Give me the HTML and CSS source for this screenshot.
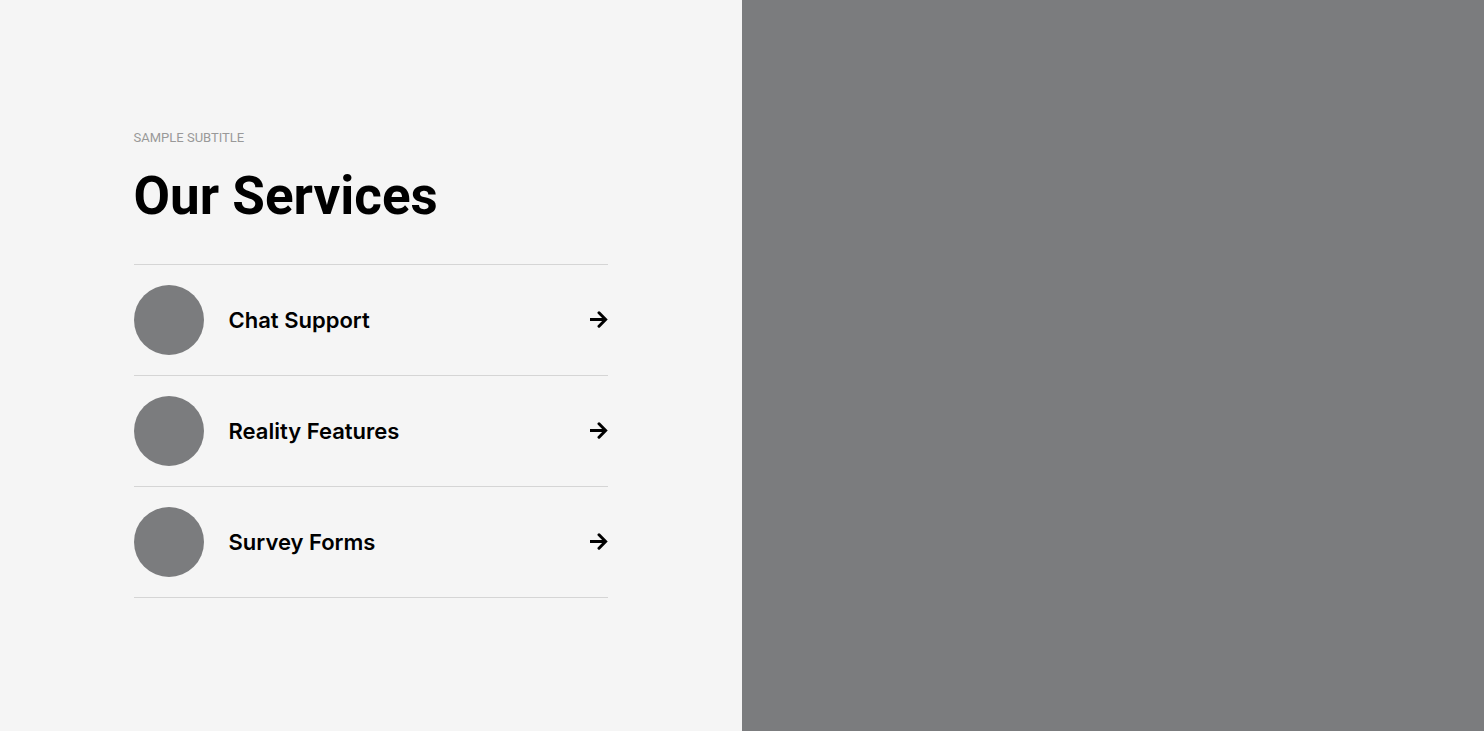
FILE: index.html
```html
<!DOCTYPE html>
<html lang="en">
<head>
<meta charset="utf-8">
<meta name="viewport" content="width=device-width, initial-scale=1">
<title>Our Services</title>
<link rel="stylesheet" href="styles.css">
</head>
<body>
<main class="split">
  <section class="services">
    <p class="subtitle">SAMPLE SUBTITLE</p>
    <h1 class="title">Our Services</h1>
    <ul class="list">
      <li class="item"><a class="link" href="#chat"><span class="dot"></span><span class="name">Chat Support</span><svg class="arrow" viewBox="0 0 18 18" aria-hidden="true"><path d="M0 8.5H15"/><path stroke-linecap="round" d="M9 1.8L15.6 8.5L9 15.2"/></svg></a></li>
      <li class="item"><a class="link" href="#reality"><span class="dot"></span><span class="name">Reality Features</span><svg class="arrow" viewBox="0 0 18 18" aria-hidden="true"><path d="M0 8.5H15"/><path stroke-linecap="round" d="M9 1.8L15.6 8.5L9 15.2"/></svg></a></li>
      <li class="item"><a class="link" href="#survey"><span class="dot"></span><span class="name">Survey Forms</span><svg class="arrow" viewBox="0 0 18 18" aria-hidden="true"><path d="M0 8.5H15"/><path stroke-linecap="round" d="M9 1.8L15.6 8.5L9 15.2"/></svg></a></li>
    </ul>
  </section>
  <div class="media"></div>
</main>
</body>
</html>
```

FILE: styles.css
```css
* { box-sizing: border-box; }
body { margin: 0; font-family: Inter, "Liberation Sans", sans-serif; color: #000; }
.split { display: grid; grid-template-columns: 1fr 1fr; min-height: 100vh; }
.services { background: #f5f5f5; padding: 128px 18%; }
.media { background: #7b7c7e; }
.subtitle { margin: 0; font-family: Roboto, sans-serif; font-size: 13px; line-height: 20px; color: #999; }
.title { margin: 18px 0 38px; font-family: Roboto, sans-serif; font-size: 53px; line-height: 60px; font-weight: 700; }
.list { list-style: none; margin: 0; padding: 0; border-top: 1px solid #d5d5d5; }
.item { border-bottom: 1px solid #d5d5d5; }
.link { display: flex; align-items: center; gap: 25px; padding: 20px 0; color: inherit; text-decoration: none; }
.dot { width: 70px; height: 70px; border-radius: 50%; background: #7b7c7e; }
.name { flex: 1; font-size: 22px; line-height: 30px; font-weight: 600; }
.arrow { width: 18px; height: 18px; fill: none; stroke: #000; stroke-width: 3; }
```
